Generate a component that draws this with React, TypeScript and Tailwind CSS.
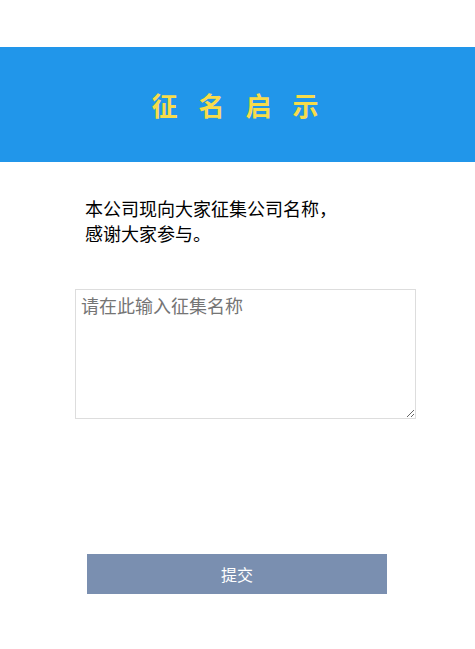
import React from 'react';

export default function App() {
  return (
    <div
      className="min-h-screen bg-white pt-[47px]"
      style={{ fontFamily: '"Noto Sans CJK SC", "Noto Sans", sans-serif' }}
    >
      {/* Header */}
      <div className="h-[115px] bg-[#2196ea] flex items-center justify-center">
        <h1 className="pl-[16px] text-[26px] font-bold tracking-[21px] text-[#f7dc4b]">征名启示</h1>
      </div>

      {/* Notice */}
      <div className="pl-[85px] pt-[34px] text-[18px] leading-[25px] text-black">
        <p>本公司现向大家征集公司名称，</p>
        <p>感谢大家参与。</p>
      </div>

      {/* Input */}
      <div className="pl-[75px] pt-[43px]">
        <textarea
          className="block w-[341px] h-[130px] border border-[#dddddd] px-[5px] py-[3px] text-[18px] leading-[24px] text-black placeholder:text-[#757575] outline-none"
          placeholder="请在此输入征集名称"
        />
      </div>

      {/* Submit */}
      <div className="pl-[87px] pt-[135px]">
        <button className="w-[300px] h-[40px] bg-[#7a8fb0] text-white text-[16px]">提交</button>
      </div>
    </div>
  );
}
